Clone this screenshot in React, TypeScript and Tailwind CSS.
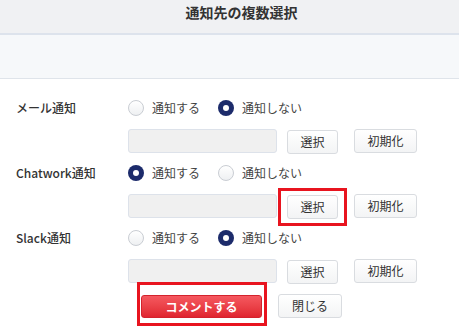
import React, { useState } from "react";

type Choice = "on" | "off";

function Radio({ checked, label, onClick }: { checked: boolean; label: string; onClick: () => void }) {
  return (
    <button type="button" onClick={onClick} className="flex items-center gap-[8px] h-[20px]">
      {checked ? (
        <span className="w-[16px] h-[16px] rounded-full bg-[#1c2b6b] flex items-center justify-center">
          <span className="w-[6px] h-[6px] rounded-full bg-white" />
        </span>
      ) : (
        <span className="w-[16px] h-[16px] rounded-full border border-[#c9cdd3] bg-gradient-to-b from-white to-[#eef0f2]" />
      )}
      <span className="text-[12px] leading-[20px] text-[#444]">{label}</span>
    </button>
  );
}

function GrayButton({ children, className = "" }: { children: React.ReactNode; className?: string }) {
  return (
    <button
      type="button"
      className={`h-[24px] rounded-[3px] border border-[#d9dce0] bg-gradient-to-b from-white to-[#f3f4f5] text-[12px] leading-[22px] text-[#333] ${className}`}
    >
      {children}
    </button>
  );
}

export default function App() {
  const [mail, setMail] = useState<Choice>("off");
  const [chatwork, setChatwork] = useState<Choice>("on");
  const [slack, setSlack] = useState<Choice>("off");

  const rows = [
    { name: "メール通知", value: mail, set: setMail, mark: false },
    { name: "Chatwork通知", value: chatwork, set: setChatwork, mark: true },
    { name: "Slack通知", value: slack, set: setSlack, mark: false },
  ];

  return (
    <div className="w-[469px] h-[333px] bg-white font-['Noto_Sans_CJK_JP','Noto_Sans',sans-serif] overflow-hidden">
      <div className="w-[459px]">
        {/* Title */}
        <div className="h-[35px] bg-[#f0f1f3] border-b-2 border-[#dde3ec] flex justify-center pl-[24px] pt-[3px]">
          <h1 className="text-[14px] leading-[18px] font-bold text-[#333]">通知先の複数選択</h1>
        </div>
        <div className="h-[44px] bg-[#f6f8fa] border-b border-[#dfe4ea]" />

        {/* Form */}
        <div className="pt-[19px]">
          {rows.map((row) => (
            <div key={row.name} className="flex h-[55px] mb-[10px]">
              <div className="w-[128px] h-[20px] pl-[16px] text-[12px] leading-[20px] font-medium text-[#333]">
                {row.name}
              </div>
              <div className="flex flex-col">
                <div className="flex items-center gap-[18px] h-[20px]">
                  <Radio checked={row.value === "on"} label="通知する" onClick={() => row.set("on")} />
                  <Radio checked={row.value === "off"} label="通知しない" onClick={() => row.set("off")} />
                </div>
                <div className="flex items-center h-[24px] mt-[11px]">
                  <input
                    readOnly
                    className="w-[149px] h-[24px] rounded-[3px] border border-[#dde2ea] bg-[#f0f0f0]"
                  />
                  <div className="relative ml-[10px]">
                    <GrayButton className="w-[51px]">選択</GrayButton>
                    {row.mark && (
                      <div className="absolute -left-[9px] -right-[9px] -top-[5px] -bottom-[7px] border-[3px] border-[#e8141f] pointer-events-none" />
                    )}
                  </div>
                  <GrayButton className="w-[63px] ml-[16px]">初期化</GrayButton>
                </div>
              </div>
            </div>
          ))}
        </div>

        {/* Actions */}
        <div className="flex items-center pl-[141px] mt-[6px]">
          <div className="relative">
            <button
              type="button"
              className="w-[121px] h-[23px] rounded-[3px] border border-[#d3232d] bg-gradient-to-b from-[#f5585f] to-[#e0242f] text-white text-[12px] leading-[21px] font-bold"
            >
              コメントする
            </button>
            <div className="absolute -left-[4px] -right-[5px] -top-[11px] -bottom-[8px] border-[3px] border-[#e8141f] pointer-events-none" />
          </div>
          <GrayButton className="w-[64px] ml-[16px]">閉じる</GrayButton>
        </div>
      </div>
    </div>
  );
}
